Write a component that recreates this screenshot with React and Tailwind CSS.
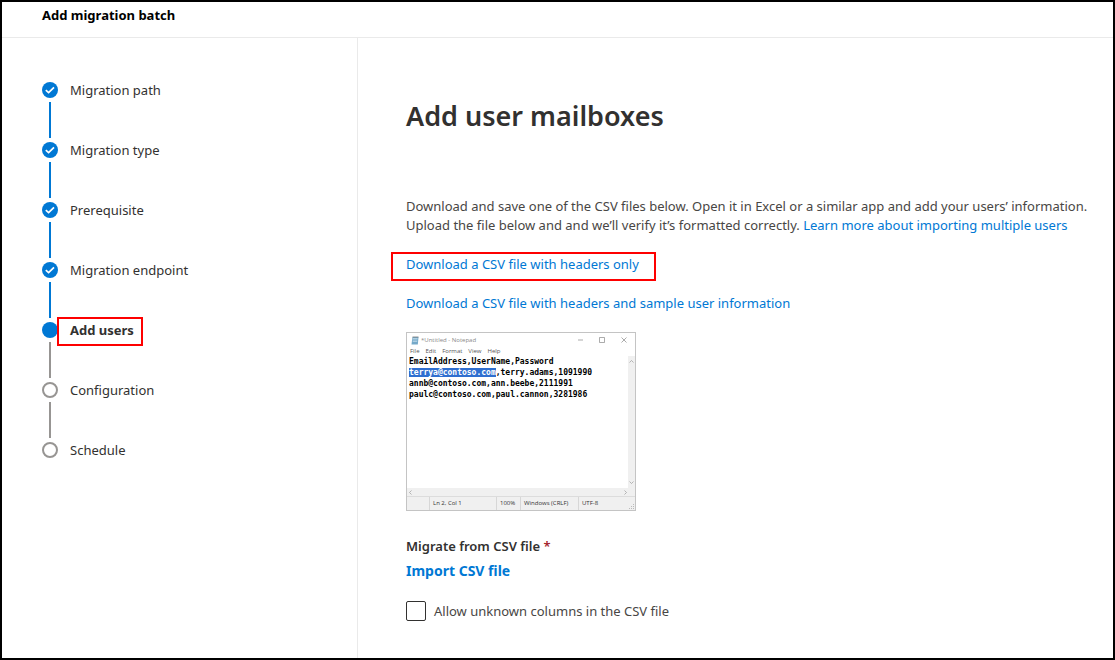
import React, { useState } from 'react'

const STEPS = [
  { label: 'Migration path', status: 'done' },
  { label: 'Migration type', status: 'done' },
  { label: 'Prerequisite', status: 'done' },
  { label: 'Migration endpoint', status: 'done' },
  { label: 'Add users', status: 'current' },
  { label: 'Configuration', status: 'todo' },
  { label: 'Schedule', status: 'todo' },
]

function StepIcon({ status }) {
  if (status === 'todo') {
    return <span className="block size-4 rounded-full border-2 border-[#979593] bg-white" />
  }
  return (
    <span className="block size-4 rounded-full bg-[#0078d4]">
      {status === 'done' && (
        <svg viewBox="0 0 16 16" className="size-4" fill="none" stroke="white" strokeWidth="1.7">
          <path d="M3.8 8.2 L6.6 10.7 L12 5.3" />
        </svg>
      )}
    </span>
  )
}

function Steps() {
  return (
    <ol>
      {STEPS.map((step, i) => (
        <li key={step.label} className="flex gap-3 leading-4">
          <div className="flex w-4 flex-col items-center">
            <StepIcon status={step.status} />
            {i < STEPS.length - 1 && (
              <span className={`my-1 h-9 w-0.5 ${step.status === 'done' ? 'bg-[#0078d4]' : 'bg-[#979593]'}`} />
            )}
          </div>
          {step.status === 'current' ? (
            <div className="relative h-4">
              <span className="font-bold" aria-current="step">{step.label}</span>
              <span className="absolute -top-[5px] -right-[9px] -bottom-2 -left-[13px] border-2 border-[#fe0000]" />
            </div>
          ) : (
            <span>{step.label}</span>
          )}
        </li>
      ))}
    </ol>
  )
}

function Notepad() {
  return (
    <figure className="flex h-[179px] w-[230px] flex-col border border-[#c4c4c4] bg-white font-['Open_Sans',sans-serif] text-[6px] text-[#555]">
      {/* Title bar */}
      <div className="flex h-[14px] items-center pl-1 text-[#888]">
        <svg viewBox="0 0 8 9" className="mr-0.5 h-[9px] w-2">
          <path d="M1.5 1 H7.5 L6.8 8.5 H0.5 Z" fill="#75a9c9" />
          <path d="M2 2.5 H6.6 M1.8 4 H6.4 M1.7 5.5 H6.2" stroke="#d5e9f4" strokeWidth="0.6" />
          <path d="M1.5 1 H7.5" stroke="#777" strokeWidth="0.8" />
        </svg>
        <span className="flex-1">*Untitled - Notepad</span>
        <svg viewBox="0 0 52 8" className="mr-1.5 h-2 w-[52px]" fill="none" stroke="#888" strokeWidth="0.7">
          <path d="M1 4 H6" />
          <path d="M22.5 1.5 H27.5 V6.5 H22.5 Z" />
          <path d="M44.5 1.5 L49.5 6.5 M49.5 1.5 L44.5 6.5" />
        </svg>
      </div>
      <div className="flex h-[9px] items-center gap-1.5 pl-[3px]">
        <span>File</span>
        <span>Edit</span>
        <span>Format</span>
        <span>View</span>
        <span>Help</span>
      </div>

      <div className="flex flex-1">
        <div className="flex-1 pl-0.5 font-['DejaVu_Sans_Mono',monospace] text-[8px] leading-[11px] font-bold whitespace-nowrap text-black">
          <p>EmailAddress,UserName,Password</p>
          <p><span className="bg-[#2f6fd0] text-white">terrya@contoso.com</span>,terry.adams,1091990</p>
          <p>annb@contoso.com,ann.beebe,2111991</p>
          <p>paulc@contoso.com,paul.cannon,3281986</p>
        </div>
        <div className="flex w-[7px] flex-col items-center justify-between bg-[#f0f0f0] py-1">
          <svg viewBox="0 0 5 3" className="h-[3px] w-[5px]" fill="none" stroke="#999" strokeWidth="0.7"><path d="M0.5 2.5 L2.5 0.5 L4.5 2.5" /></svg>
          <svg viewBox="0 0 5 3" className="h-[3px] w-[5px]" fill="none" stroke="#999" strokeWidth="0.7"><path d="M0.5 0.5 L2.5 2.5 L4.5 0.5" /></svg>
        </div>
      </div>
      <div className="flex h-2 items-center justify-between bg-[#f0f0f0] pr-2 pl-0.5">
        <svg viewBox="0 0 3 5" className="h-[5px] w-[3px]" fill="none" stroke="#999" strokeWidth="0.7"><path d="M2.5 0.5 L0.5 2.5 L2.5 4.5" /></svg>
        <svg viewBox="0 0 3 5" className="h-[5px] w-[3px]" fill="none" stroke="#999" strokeWidth="0.7"><path d="M0.5 0.5 L2.5 2.5 L0.5 4.5" /></svg>
      </div>

      {/* Status bar */}
      <div className="flex h-[14px] items-stretch border-t border-[#dcdcdc] bg-[#f0f0f0] leading-3 text-[#333]">
        <span className="w-[22px]" />
        <span className="w-[67px] border-l border-[#d7d7d7] pl-[3px]">Ln 2, Col 1</span>
        <span className="w-6 border-l border-[#d7d7d7] pl-[3px]">100%</span>
        <span className="w-[58px] border-l border-[#d7d7d7] pl-[3px]">Windows (CRLF)</span>
        <span className="flex-1 border-l border-[#d7d7d7] pl-[3px]">UTF-8</span>
        <svg viewBox="0 0 6 6" className="size-1.5 self-end" fill="#bbb">
          <path d="M4 0h1v1h-1z M2 2h1v1h-1z M4 2h1v1h-1z M0 4h1v1h-1z M2 4h1v1h-1z M4 4h1v1h-1z" />
        </svg>
      </div>
    </figure>
  )
}

export default function App() {
  const [allowUnknown, setAllowUnknown] = useState(false)

  return (
    <div className="flex min-h-screen flex-col border-2 border-black bg-white font-['Noto_Sans','Open_Sans',sans-serif] text-[13px] leading-[19px] text-[#323130]">
      <header className="border-b border-[#eaeaea] px-10 pt-1 pb-3">
        <h1 className="font-bold text-black">Add migration batch</h1>
      </header>

      <div className="flex flex-1">
        <nav aria-label="Progress" className="w-[356px] shrink-0 border-r border-[#eaeaea] px-10 pt-11">
          <Steps />
        </nav>

        <main className="min-w-0 flex-1 pt-15 pr-3 pl-12">
          <h2 className="text-[27px] leading-9 font-semibold">Add user mailboxes</h2>

          <p className="mt-[63px] text-[#484644]">
            Download and save one of the CSV files below. Open it in Excel or a similar app and add your users’ information.
            Upload the file below and and we’ll verify it’s formatted correctly.{' '}
            <a href="#learn" className="text-[#0078d4]">Learn more about importing multiple users</a>
          </p>
          <div className="mt-5 flex">
            <a href="#headers" className="relative text-[#0078d4]">
              Download a CSV file with headers only
              <span className="absolute -top-[3px] -right-[17px] -bottom-[7px] -left-[15px] border-2 border-[#fe0000]" />
            </a>
          </div>
          <div className="mt-5 mb-[19px] flex">
            <a href="#sample" className="text-[#0078d4]">Download a CSV file with headers and sample user information</a>
          </div>

          <Notepad />

          <p className="mt-[26px] font-semibold">
            Migrate from CSV file <span className="text-[#a4262c]">*</span>
          </p>
          <button type="button" className="mt-[5px] block text-[14px] font-bold text-[#0078d4]">Import CSV file</button>

          <label className="mt-[21px] flex items-center gap-2 text-[#484644]">
            <input
              type="checkbox"
              checked={allowUnknown}
              onChange={(e) => setAllowUnknown(e.target.checked)}
              className="size-5 appearance-none rounded-xs border border-[#323130] bg-white checked:bg-[#0078d4]"
            />
            Allow unknown columns in the CSV file
          </label>
        </main>
      </div>
    </div>
  )
}
